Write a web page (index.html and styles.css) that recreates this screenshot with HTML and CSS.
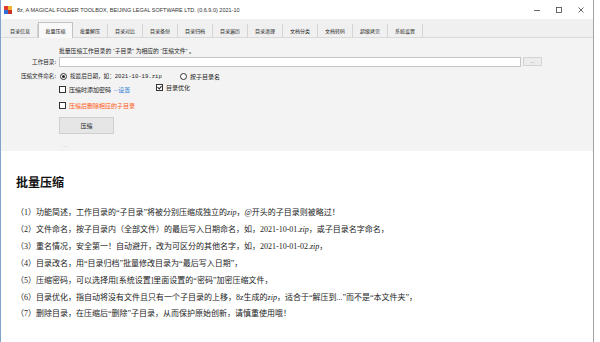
FILE: index.html
```html
<!DOCTYPE html>
<html lang="zh-CN">
<head>
    <meta charset="UTF-8">
    <title>8z</title>
    <link rel="stylesheet" href="styles.css">
</head>
<body>
    <div class="window">
        <div class="titlebar">
            <svg class="app-icon" width="8" height="8" viewBox="0 0 8 8">
                <rect x="0" y="0" width="4" height="4" fill="#e03a2f"/>
                <rect x="4" y="0" width="4" height="4" fill="#f2b632"/>
                <rect x="0" y="4" width="4" height="4" fill="#2f6fd6"/>
                <rect x="4" y="4" width="4" height="4" fill="#c7322a"/>
            </svg>
            <span class="title">8z, A MAGICAL FOLDER TOOLBOX, BEIJING LEGAL SOFTWARE LTD. (0.6.9.0) 2021-10</span>
            <div class="controls">
                <svg width="6" height="6" viewBox="0 0 6 6"><line x1="0" y1="3.5" x2="6" y2="3.5" stroke="#444" stroke-width="0.8"/></svg>
                <svg width="6" height="6" viewBox="0 0 6 6"><rect x="0.5" y="0.5" width="5" height="5" fill="none" stroke="#444" stroke-width="0.8"/></svg>
                <svg width="6" height="6" viewBox="0 0 6 6"><path d="M0.5 0.5 L5.5 5.5 M5.5 0.5 L0.5 5.5" stroke="#444" stroke-width="0.8"/></svg>
            </div>
        </div>

        <div class="tabs">
            <div class="tab">目录信息</div>
            <div class="tab active">批量压缩</div>
            <div class="tab">批量解压</div>
            <div class="tab">目录对比</div>
            <div class="tab">目录备份</div>
            <div class="tab">目录归档</div>
            <div class="tab">目录遍历</div>
            <div class="tab">目录清理</div>
            <div class="tab">文档分类</div>
            <div class="tab">文档转码</div>
            <div class="tab">超级拷贝</div>
            <div class="tab">系统设置</div>
        </div>

        <div class="panel">
            <div class="row row-desc">
                <span></span>
                <span class="desc">批量压缩工作目录的 “子目录” 为相应的 “压缩文件” 。</span>
            </div>
            <div class="row row-dir">
                <span class="label">工作目录:</span>
                <div class="dir-field">
                    <div class="input"></div>
                    <div class="browse">...</div>
                </div>
            </div>
            <div class="row row-opt">
                <span class="label">压缩文件命名:</span>
                <div class="opts">
                    <span class="opt opt-a"><i class="radio on"></i>按最后日期，如：<span class="mono">2021-10-19.zip</span></span>
                    <span class="opt"><i class="radio"></i>按子目录名</span>
                </div>
            </div>
            <div class="row row-check">
                <span></span>
                <div class="opts">
                    <span class="opt opt-b"><i class="box"></i>压缩时添加密码<span class="link">--设置</span></span>
                    <span class="opt opt-up"><i class="box checked"></i>目录优化</span>
                </div>
            </div>
            <div class="row row-del">
                <span></span>
                <span class="opt warn"><i class="box"></i>压缩后删除相应的子目录</span>
            </div>
            <div class="row row-btn">
                <span></span>
                <div><div class="btn">压缩</div></div>
            </div>
            <div class="grip">.....</div>
        </div>

        <div class="doc">
            <h1>批量压缩</h1>
            <p>（1）功能简述，工作目录的“子目录”将被分别压缩成独立的<em>zip</em>，@开头的子目录则被略过！</p>
            <p>（2）文件命名，按子目录内（全部文件）的最后写入日期命名，如，2021-10-01.<em>zip</em>，或子目录名字命名，</p>
            <p>（3）重名情况，安全第一！自动避开，改为可区分的其他名字，如，2021-10-01-02.<em>zip</em>，</p>
            <p>（4）目录改名，用“目录归档”批量修改目录为“最后写入日期”，</p>
            <p>（5）压缩密码，可以选择用[系统设置]里面设置的“密码”加密压缩文件，</p>
            <p>（6）目录优化，指自动将没有文件且只有一个子目录的上移，8z生成的<em>zip</em>，适合于“解压到...”而不是“本文件夹”，</p>
            <p>（7）删除目录，在压缩后“删除”子目录，从而保护原始创新，请慎重使用哦！</p>
        </div>
    </div>
</body>
</html>
```

FILE: styles.css
```css
body {
    margin: 0;
    background-color: #ffffff;
    font-family: "Noto Sans CJK SC", "Noto Sans", sans-serif;
    color: #1a1a1a;
}
.window {
    width: 594px;
    height: 342px;
    box-sizing: border-box;
    border-left: 1px solid #7fa5cf;
    border-right: 1px solid #a3a3a3;
    overflow: hidden;
}
.titlebar {
    height: 19px;
    display: flex;
    align-items: center;
    background-color: #ffffff;
    padding-left: 3px;
}
.app-icon {
    margin-right: 5px;
}
.title {
    font-family: "Liberation Sans", sans-serif;
    font-size: 5.5px;
    color: #333;
}
.controls {
    margin-left: auto;
    display: flex;
    gap: 16px;
    padding-right: 9px;
}
.tabs {
    height: 19px;
    background-color: #f0f0f0;
    display: flex;
    align-items: flex-end;
    padding-left: 2px;
    border-bottom: 1px solid #dadada;
    box-sizing: border-box;
}
.tab {
    width: 35px;
    height: 13px;
    box-sizing: border-box;
    border-right: 1px solid #d4d4d4;
    font-size: 5px;
    line-height: 13px;
    text-align: center;
    color: #222;
}
.tab.active {
    height: 16px;
    line-height: 16px;
    margin-bottom: -1px;
    border: 1px solid #c2c2c2;
    border-bottom: none;
    background-color: #f9f9f9;
}
.panel {
    height: 113px;
    box-sizing: border-box;
    background-color: #f3f3f3;
    display: flex;
    flex-direction: column;
    font-size: 6px;
}
.row {
    display: grid;
    grid-template-columns: 55px 1fr;
    column-gap: 3px;
    align-items: center;
}
.label {
    text-align: right;
    font-size: 5.6px;
    color: #222;
}
.row-desc {
    margin-top: 8px;
    height: 8px;
}
.desc {
    font-family: "Liberation Sans", "Noto Sans CJK SC", sans-serif;
    font-size: 5.8px;
    color: #222;
}
.row-dir {
    margin-top: 2px;
    height: 11px;
}
.dir-field {
    display: flex;
    align-items: center;
    gap: 2px;
}
.input {
    width: 462px;
    height: 10px;
    box-sizing: border-box;
    background-color: #ffffff;
    border: 1px solid #c6c6c6;
}
.browse {
    width: 19px;
    height: 9px;
    box-sizing: border-box;
    border: 1px solid #d4d4d4;
    background-color: #ececec;
    color: #aaa;
    font-size: 5px;
    line-height: 6px;
    text-align: center;
}
.row-opt {
    margin-top: 4px;
    height: 10px;
}
.opts {
    display: flex;
    align-items: center;
}
.opt {
    display: flex;
    align-items: center;
    color: #222;
}
.opt-a {
    width: 120px;
    font-size: 5.6px;
}
.mono {
    font-family: "Liberation Mono", monospace;
    font-size: 5.6px;
}
.radio {
    width: 5px;
    height: 5px;
    border: 1px solid #333;
    border-radius: 50%;
    background-color: #fff;
    margin-right: 3px;
    margin-left: 1px;
    position: relative;
}
.radio.on::after {
    content: "";
    position: absolute;
    left: 1px;
    top: 1px;
    width: 3px;
    height: 3px;
    border-radius: 50%;
    background-color: #222;
}
.row-check {
    margin-top: 3px;
    height: 10px;
}
.opt-b {
    width: 97px;
}
.opt-up {
    margin-top: -3px;
}
.box {
    width: 5px;
    height: 5px;
    border: 1px solid #333;
    background-color: #fff;
    margin-right: 3px;
    position: relative;
}
.box.checked::after {
    content: "";
    position: absolute;
    left: 1px;
    top: 0;
    width: 2px;
    height: 3px;
    border-right: 1px solid #222;
    border-bottom: 1px solid #222;
    transform: rotate(40deg);
}
.link {
    color: #2f7bd6;
    margin-left: 3px;
}
.row-del {
    margin-top: 6px;
    height: 10px;
}
.warn {
    color: #ff5a14;
}
.row-btn {
    margin-top: 7px;
    height: 17px;
}
.btn {
    width: 55px;
    height: 17px;
    box-sizing: border-box;
    border: 1px solid #cfcfcf;
    background-color: #e6e6e6;
    font-size: 6px;
    line-height: 15px;
    text-align: center;
    color: #222;
}
.grip {
    margin-top: auto;
    padding-left: 62px;
    font-family: "Liberation Sans", sans-serif;
    font-size: 3px;
    line-height: 5px;
    color: #9a9a9a;
    padding-bottom: 2px;
}
.doc {
    padding-left: 15px;
    background-color: #ffffff;
}
.doc h1 {
    margin: 24px 0 16px 0;
    font-size: 12px;
    line-height: 14px;
    font-weight: bold;
    color: #111;
}
.doc p {
    margin: 0;
    font-family: "Liberation Serif", "Noto Sans CJK SC", serif;
    font-size: 8px;
    line-height: 16.9px;
    color: #222;
}
.doc em {
    font-style: italic;
}
```
